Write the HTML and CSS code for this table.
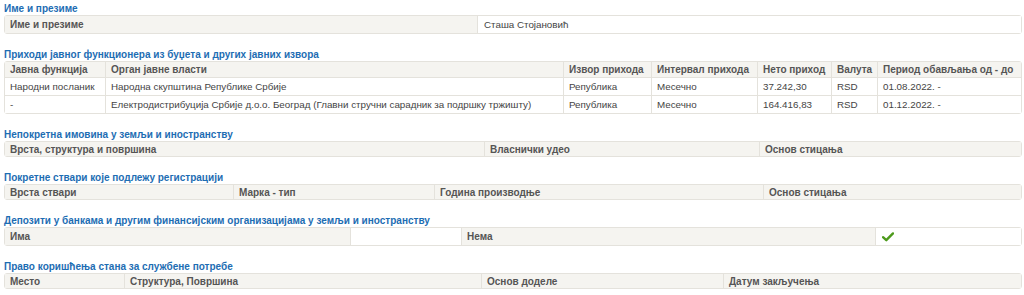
FILE: index.html
```html
<!DOCTYPE html>
<html lang="sr">
<head>
<meta charset="utf-8">
<title>Имовина</title>
<link rel="stylesheet" href="styles.css">
</head>
<body>
<section class="sec">
  <h3 class="title">Име и презиме</h3>
  <table class="grid t-name">
    <colgroup><col><col></colgroup>
    <tr class="last"><th class="tall">Име и презиме</th><td class="val tall">Сташа Стојановић</td></tr>
  </table>
</section>

<section class="sec">
  <h3 class="title">Приходи јавног функционера из буџета и других јавних извора</h3>
  <table class="grid t-income">
    <colgroup><col><col><col><col><col><col><col></colgroup>
    <tr><th>Јавна функција</th><th>Орган јавне власти</th><th>Извор прихода</th><th>Интервал прихода</th><th>Нето приход</th><th>Валута</th><th>Период обављања од - до</th></tr>
    <tr><td>Народни посланик</td><td>Народна скупштина Републике Србије</td><td>Република</td><td>Месечно</td><td>37.242,30</td><td>RSD</td><td>01.08.2022. -</td></tr>
    <tr class="last"><td>-</td><td>Електродистрибуција Србије д.о.о. Београд (Главни стручни сарадник за подршку тржишту)</td><td>Република</td><td>Месечно</td><td>164.416,83</td><td>RSD</td><td>01.12.2022. -</td></tr>
  </table>
</section>

<section class="sec">
  <h3 class="title">Непокретна имовина у земљи и иностранству</h3>
  <table class="grid single t-estate">
    <colgroup><col><col><col></colgroup>
    <tr class="last"><th>Врста, структура и површина</th><th>Власнички удео</th><th>Основ стицања</th></tr>
  </table>
</section>

<section class="sec">
  <h3 class="title">Покретне ствари које подлежу регистрацији</h3>
  <table class="grid single t-move">
    <colgroup><col><col><col><col></colgroup>
    <tr class="last"><th>Врста ствари</th><th>Марка - тип</th><th>Година производње</th><th>Основ стицања</th></tr>
  </table>
</section>

<section class="sec">
  <h3 class="title">Депозити у банкама и другим финансијским организацијама у земљи и иностранству</h3>
  <table class="grid t-dep">
    <colgroup><col><col><col><col></colgroup>
    <tr class="last"><th class="tall">Има</th><td class="val tall"></td><th class="tall">Нема</th><td class="val tall"><svg class="check" width="12" height="10" viewBox="0 0 12 10"><path d="M1 5.2 L4.3 8.2 L11 1.4" fill="none" stroke="#4d9a1c" stroke-width="2.4" stroke-linecap="round" stroke-linejoin="round"/></svg></td></tr>
  </table>
</section>

<section class="sec">
  <h3 class="title">Право коришћења стана за службене потребе</h3>
  <table class="grid single t-flat">
    <colgroup><col><col><col><col></colgroup>
    <tr class="last"><th>Место</th><th>Структура, Површина</th><th>Основ доделе</th><th>Датум закључења</th></tr>
  </table>
</section>
</body>
</html>
```

FILE: styles.css
```css
html, body {
  margin: 0;
  padding: 0;
  background: #ffffff;
}
body {
  padding: 2px 4px 0 4px;
  font-family: "Liberation Sans", Arial, sans-serif;
  font-size: 9.8px;
  color: #444;
}
.sec {
  margin-bottom: 14px;
}
.title {
  margin: 0;
  font-size: 10px;
  line-height: 13px;
  font-weight: bold;
  color: #1d6db3;
}
.grid {
  width: 1016px;
  table-layout: fixed;
  border-collapse: separate;
  border-spacing: 0;
  border: 1px solid #e4e2dc;
  border-radius: 3px;
}
.grid th,
.grid td {
  text-align: left;
  padding: 2px 5px;
  line-height: 13px;
  border-bottom: 1px solid #e4e2dc;
  border-left: 1px solid #e4e2dc;
  white-space: nowrap;
  overflow: hidden;
}
.grid th {
  padding: 2px 5px 1px 5px;
  line-height: 12px;
  background: #f5f4f0;
  color: #555;
  font-weight: bold;
  font-size: 10px;
}
.grid td {
  background: #fff;
  color: #444;
  font-size: 9.8px;
}
.grid th:first-child,
.grid td:first-child {
  border-left: 0;
}
.grid tr.last th,
.grid tr.last td {
  border-bottom: 0;
}
.grid.single th {
  padding-bottom: 0;
}
.grid th.tall,
.grid td.tall {
  padding-top: 2px;
  padding-bottom: 2px;
  line-height: 13px;
  height: 13px;
}
.grid td.val {
  padding-left: 6px;
}
.check {
  display: block;
  margin-top: 1px;
}

.t-name col:nth-child(1) { width: 472px; }
.t-name col:nth-child(2) { width: 544px; }

.t-income col:nth-child(1) { width: 100px; }
.t-income col:nth-child(2) { width: 458px; }
.t-income col:nth-child(3) { width: 88px; }
.t-income col:nth-child(4) { width: 106px; }
.t-income col:nth-child(5) { width: 74px; }
.t-income col:nth-child(6) { width: 46px; }
.t-income col:nth-child(7) { width: 144px; }

.t-estate col:nth-child(1) { width: 479px; }
.t-estate col:nth-child(2) { width: 275px; }
.t-estate col:nth-child(3) { width: 262px; }

.t-move col:nth-child(1) { width: 228px; }
.t-move col:nth-child(2) { width: 201px; }
.t-move col:nth-child(3) { width: 329px; }
.t-move col:nth-child(4) { width: 258px; }

.t-dep col:nth-child(1) { width: 345px; }
.t-dep col:nth-child(2) { width: 111px; }
.t-dep col:nth-child(3) { width: 414px; }
.t-dep col:nth-child(4) { width: 146px; }

.t-flat col:nth-child(1) { width: 119px; }
.t-flat col:nth-child(2) { width: 357px; }
.t-flat col:nth-child(3) { width: 242px; }
.t-flat col:nth-child(4) { width: 298px; }
```
